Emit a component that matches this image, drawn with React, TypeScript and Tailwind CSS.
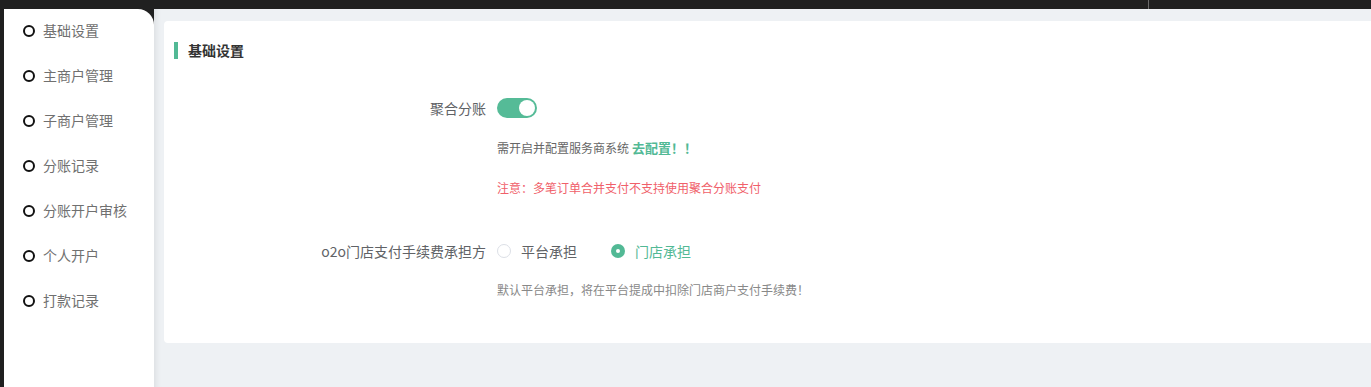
import React, { useState } from 'react';

const menu = ['基础设置', '主商户管理', '子商户管理', '分账记录', '分账开户审核', '个人开户', '打款记录'];

const font = { fontFamily: '"Noto Sans CJK SC", "Noto Sans", sans-serif' };

const App: React.FC = () => {
  const [enabled, setEnabled] = useState(true);
  const [payer, setPayer] = useState<'platform' | 'store'>('store');

  return (
    <div className="w-full h-[387px] bg-[#202020] flex flex-col overflow-hidden" style={font}>
      {/* top bar */}
      <div className="h-[9px] flex shrink-0">
        <div className="w-[1148px]" />
        <div className="w-px bg-[#6b6b6b]" />
      </div>

      <div className="flex flex-1 min-h-0">
        <div className="w-[4px] shrink-0" />

        {/* sidebar */}
        <div className="w-[150px] shrink-0 bg-white rounded-tr-[16px]">
          <div className="-mt-px">
            {menu.map((item) => (
              <div key={item} className="h-[45px] flex items-center pl-[19px]">
                <span className="w-[12px] h-[12px] rounded-full border-2 border-[#111111]" />
                <span className="ml-[8px] text-[14px] text-[#707070]">{item}</span>
              </div>
            ))}
          </div>
        </div>

        {/* main */}
        <div className="flex-1 bg-[#eef1f4] pl-[10px] pt-[12px] shadow-[inset_8px_0_6px_-6px_rgba(0,0,0,0.08)]">
          <div className="bg-white rounded-l-[4px] h-[322px] pt-[21px] pl-[10px]">
            <div className="flex items-center h-[17px]">
              <div className="w-[4px] h-[17px] bg-[#52b995]" />
              <span className="ml-[10px] text-[14px] font-bold text-[#333333]">基础设置</span>
            </div>

            {/* 聚合分账 */}
            <div className="flex items-center mt-[39px] h-[20px] -ml-[10px]">
              <div className="w-[333px] pr-[11px] text-right text-[14px] text-[#606266]">聚合分账</div>
              <button
                onClick={() => setEnabled(!enabled)}
                className={`w-[40px] h-[20px] rounded-full flex items-center px-[2px] ${enabled ? 'bg-[#55bb97] justify-end' : 'bg-[#dcdfe6] justify-start'}`}
              >
                <span className="w-[16px] h-[16px] rounded-full bg-white" />
              </button>
            </div>

            <div className="ml-[323px] mt-[20px] flex items-center h-[20px]">
              <span className="text-[12px] text-[#666666]">需开启并配置服务商系统</span>
              <span className="ml-[3px] text-[13px] font-bold text-[#52b995]">去配置！！</span>
            </div>

            <div className="ml-[323px] mt-[20px] h-[20px] flex items-center text-[12px] text-[#f0606a]">
              注意：多笔订单合并支付不支持使用聚合分账支付
            </div>

            {/* o2o */}
            <div className="flex items-center mt-[43px] h-[20px] -ml-[10px]">
              <div className="w-[333px] pr-[11px] text-right text-[14px] text-[#606266]">o2o门店支付手续费承担方</div>
              <label className="flex items-center cursor-pointer" onClick={() => setPayer('platform')}>
                <span
                  className={`w-[14px] h-[14px] rounded-full flex items-center justify-center ${payer === 'platform' ? 'bg-[#52b995]' : 'border border-[#dcdfe6] bg-white'}`}
                >
                  {payer === 'platform' && <span className="w-[4px] h-[4px] rounded-full bg-white" />}
                </span>
                <span className={`ml-[10px] text-[14px] ${payer === 'platform' ? 'text-[#52b995]' : 'text-[#606266]'}`}>平台承担</span>
              </label>
              <label className="flex items-center cursor-pointer ml-[34px]" onClick={() => setPayer('store')}>
                <span
                  className={`w-[14px] h-[14px] rounded-full flex items-center justify-center ${payer === 'store' ? 'bg-[#52b995]' : 'border border-[#dcdfe6] bg-white'}`}
                >
                  {payer === 'store' && <span className="w-[4px] h-[4px] rounded-full bg-white" />}
                </span>
                <span className={`ml-[10px] text-[14px] ${payer === 'store' ? 'text-[#52b995]' : 'text-[#606266]'}`}>门店承担</span>
              </label>
            </div>

            <div className="ml-[323px] mt-[19px] h-[20px] flex items-center text-[12px] text-[#888888]">
              默认平台承担，将在平台提成中扣除门店商户支付手续费！
            </div>
          </div>
        </div>
      </div>
    </div>
  );
};

export default App;
